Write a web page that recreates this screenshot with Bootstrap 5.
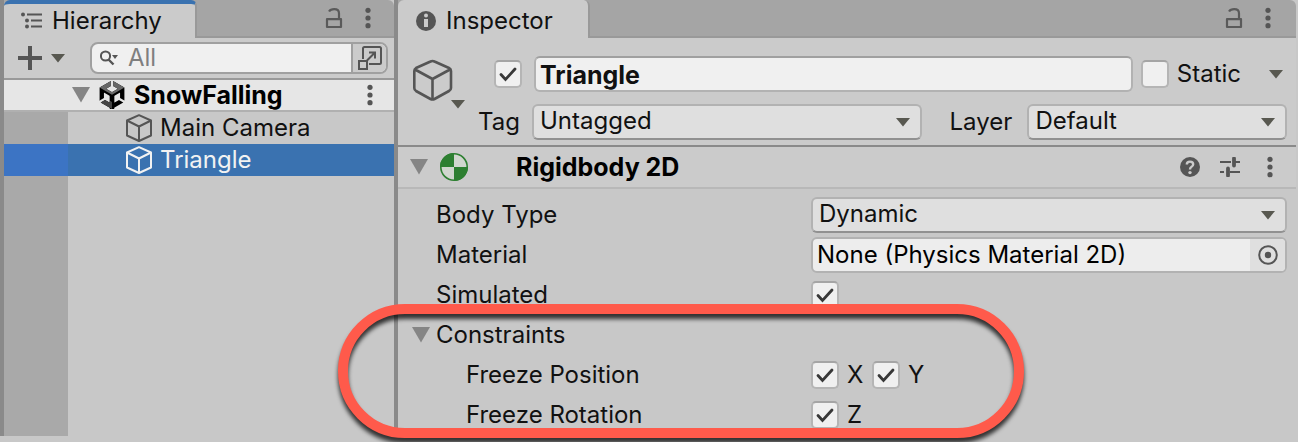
<!DOCTYPE html>
<html lang="en">
<head>
<meta charset="utf-8">
<meta name="viewport" content="width=device-width, initial-scale=1">
<title>Hierarchy and Inspector</title>
<link href="https://cdn.jsdelivr.net/npm/bootstrap@5.3.0/dist/css/bootstrap.min.css" rel="stylesheet">
<style>
  body { font: 400 24px/32px Inter, "Liberation Sans", sans-serif; color: #111; background: #c8c8c8; }
  .editor { min-height: 100vh; overflow: hidden; padding: 0 2px 6px 0; }
  .rail { width: 4px; background: #8a8a8a; }
  .pane { background: #c8c8c8; min-width: 0; }
  .pane-hierarchy { width: 390px; }
  svg { display: block; flex: none; }
  button, a { color: inherit; }
  .plain { border: 0; background: none; padding: 0; display: block; flex: none; }
  .strong { font-size: 25px; font-weight: 700; color: #000; }

  .tabstrip { height: 38px; background: #a5a5a5; border-top-right-radius: 6px; }
  .tab-rest { border-bottom: 2px solid #999; padding-right: 23px; gap: 22px; }
  .pane-inspector .tab-rest { padding-right: 25px; }
  .tab-on { background: #cbcbcb; border-right: 2px solid #999; border-radius: 6px 6px 0 0; padding-top: 3px; font-size: 24px; gap: 10px; }
  .tab-h { width: 193px; border-top: 4px solid #3a72b0; padding: 0 0 0 17px; gap: 9px; }
  .tab-i { width: 192px; padding-left: 18px; }

  .toolbar { height: 42px; background: #cbcbcb; border-bottom: 2px solid #999; padding: 0 6px 0 14px; }
  .create { gap: 9px; }
  .search { height: 32px; border: 2px solid #a0a0a0; border-radius: 8px; background: #f0f0f0; overflow: hidden; margin-left: 25px; }
  .search input { border: 0; background: none; outline: 0; padding: 0; min-width: 0; color: #111; }
  .search input::placeholder { color: #7f7f7f; opacity: 1; }
  .search .plain { background: #cbcbcb; border-left: 2px solid #a0a0a0; width: 35px; align-self: stretch; padding-left: 4px; }

  .scene { height: 32px; background: #e6e6e6; border-bottom: 2px solid #b0b0b0; padding: 0 21px 0 68px; }
  .tree { background: linear-gradient(to right, #a9a9a9 64px, #c8c8c8 64px); }
  .node { height: 32px; padding-left: 121px; gap: 7px; text-decoration: none; }
  .node.on { color: #f2f2f2; background: linear-gradient(to right, #3c74c4 64px, #3a72b0 64px); }

  .obj-head { background: #cbcbcb; border-bottom: 2px solid #8a8a8a; padding: 18px 9px 5px 15px; }
  .obj-icon { width: 61px; }
  .field { height: 36px; border: 2px solid #b2b2b2; border-radius: 6px; color: #111; font-size: 24px; line-height: 30px; }
  .field-text { background: #f0f0f0; border-top-color: #a0a0a0; padding: 2px 4px 0; min-width: 0; margin-left: 12px; }
  .field-text.strong { font-size: 25px; }
  .field-pick { appearance: none; border-bottom-color: #919191; padding: 0 40px 2px 6px; min-width: 0;
    background: #dfdfdf url("data:image/svg+xml,%3Csvg xmlns='http://www.w3.org/2000/svg' width='14' height='9'%3E%3Cpath d='M0 0H14L7 8.500z' fill='%23585850'/%3E%3C/svg%3E") no-repeat right 10px center; }
  .form-check-input.tick { width: 28px; height: 28px; margin: 0; flex: none; border: 2px solid #b5b5b5; border-top-color: #a5a5a5; border-radius: 5px; background-color: #f0f0f0; }
  .form-check-input.tick:checked { background: #f0f0f0 url("data:image/svg+xml,%3Csvg xmlns='http://www.w3.org/2000/svg' width='24' height='24' fill='none' stroke='%23383838' stroke-width='2.800'%3E%3Cpath d='M5 12.500l4.500 5L19 7' stroke-linecap='round'/%3E%3C/svg%3E") center/24px no-repeat; }
  .tag-label { width: 58px; padding-left: 4px; }
  .layer-label { width: 105px; padding-left: 27px; }
  .grow-tag { flex: 13 1 0; }
  .grow-layer { flex: 8 1 0; }

  .comp-head { height: 42px; background: #cbcbcb; border-bottom: 2px solid #b8b8b8; padding: 0 23px 0 12px; }
  .comp-icon { margin-left: 12px; }
  .comp-title { margin-left: 48px; }
  .comp-tools { gap: 20px; }
  .comp-tools .last { margin-left: 7px; }
  .props { padding: 6px 9px 1px 0; }
  .prop { height: 40px; }
  .prop-name { width: 413px; padding-left: 38px; flex: none; }
  .prop-sub { padding-left: 68px; }
  .fold { padding-left: 14px; gap: 6px; }
  .object-field { background: #ededed; overflow: hidden; }
  .object-field input { border: 0; background: none; padding: 0 4px; min-width: 0; outline: 0; }
  .object-field .plain { width: 35px; align-self: stretch; background: #dfdfdf; padding-left: 8px; }
  .axis { gap: 8px; }
  .axis-name { width: 25px; }

  .callout-ring { position: absolute; left: -60px; top: -11px; width: 686px; height: 134px; border: 10px solid #ff5a4b; border-radius: 67px; filter: drop-shadow(0 5px 2px rgba(0, 0, 0, .75)); pointer-events: none; }
</style>
</head>
<body>
<svg class="d-none">
  <symbol id="cube" viewBox="0 0 28 30"><path d="M14 2.200L26 7.500V22.500L14 28L2 22.500V7.500ZM2 7.500L14 13.500L26 7.500M14 13.500V28" fill="none" stroke="currentColor" stroke-width="2" stroke-linejoin="round"/></symbol>
  <symbol id="lock" viewBox="0 0 18 22"><path d="M2 12.200H16V20H2ZM14 12V6.500Q14 2.200 9.200 2.200Q5.500 2.200 4 4.500" fill="none" stroke="#5a5a5a" stroke-width="2.200" stroke-linejoin="round"/></symbol>
  <symbol id="dots" viewBox="0 0 6 22"><g fill="#555"><circle cx="3" cy="3.300" r="2.600"/><circle cx="3" cy="11" r="2.600"/><circle cx="3" cy="18.700" r="2.600"/></g></symbol>
  <symbol id="down" viewBox="0 0 14 9"><path d="M0 0H14L7 8.500Z" fill="#585850"/></symbol>
  <symbol id="fold" viewBox="0 0 18 16"><path d="M0 0H18L9 15.500Z" fill="#858585"/></symbol>
</svg>

<div class="editor d-flex">
  <div class="rail"></div>

  <section class="pane pane-hierarchy d-flex flex-column flex-shrink-0" aria-label="Hierarchy">
    <div class="tabstrip d-flex">
      <div class="tab-on tab-h d-flex align-items-center">
        <svg width="22" height="18" viewBox="0 0 22 18"><g fill="#555"><circle cx="2" cy="2.500" r="2"/><circle cx="6" cy="8.500" r="2"/><circle cx="6" cy="14.500" r="2"/></g><path d="M6 2.500H21M10 8.500H21M10 14.500H21" stroke="#555" stroke-width="2"/></svg>
        <span>Hierarchy</span>
      </div>
      <div class="tab-rest d-flex flex-grow-1 align-items-center justify-content-end">
        <button class="plain" aria-label="Lock"><svg width="18" height="22"><use href="#lock"/></svg></button>
        <button class="plain" aria-label="Menu"><svg width="6" height="22"><use href="#dots"/></svg></button>
      </div>
    </div>

    <div class="toolbar d-flex align-items-center">
      <button class="plain create d-flex align-items-center" aria-label="Create">
        <svg width="24" height="24"><path d="M12 0V24M0 12H24" stroke="#555" stroke-width="4"/></svg>
        <svg width="14" height="9"><use href="#down"/></svg>
      </button>
      <div class="search d-flex align-items-center flex-grow-1">
        <svg class="ms-2 me-2" width="20" height="18" viewBox="0 0 20 18"><circle cx="5.500" cy="7" r="4.600" fill="none" stroke="#555" stroke-width="2"/><path d="M8.500 10.500L13.500 15.500" stroke="#555" stroke-width="2.400"/><path d="M12 6H18L15 10Z" fill="#555"/></svg>
        <input class="flex-grow-1" type="text" placeholder="All" aria-label="Search">
        <button class="plain d-flex align-items-center" aria-label="Open search window"><svg width="26" height="26" viewBox="0 0 26 26" fill="none" stroke="#555" stroke-width="2"><path d="M6 14V3.500Q6 2 7.500 2H22.500Q24 2 24 3.500V17.500Q24 19 22.500 19H12M2 16H10V24H2ZM10 15.500L18 7.500M12 7.500H18V13.500"/></svg></button>
      </div>
    </div>

    <div class="scene d-flex align-items-center">
      <button class="plain" aria-label="Collapse scene"><svg width="18" height="16"><use href="#fold"/></svg></button>
      <svg class="ms-2 me-2" width="28" height="28" viewBox="0 0 24 24">
        <defs>
          <path id="scene-mark" d="m12.9288 4.2939 3.7997 2.1929c.1366.077.1415.2905 0 .3675l-4.515 2.6076a.4192.4192 0 0 1-.4246 0L7.274 6.8543c-.139-.0745-.1415-.293 0-.3675l3.7972-2.193V0L1.3758 5.5977V16.793l3.7177-2.1456v-4.3858c-.0025-.1565.1813-.2682.318-.1838l4.5148 2.6076a.4252.4252 0 0 1 .2136.3676v5.2127c.0025.1565-.1813.2682-.3179.1838l-3.7996-2.1929-3.7178 2.1457L12 24l9.6954-5.5977-3.7178-2.1457-3.7996 2.1929c-.1341.082-.3229-.0248-.3179-.1838V13.053c0-.1565.087-.2956.2136-.3676l4.5149-2.6076c.134-.082.3228.0224.3179.1838v4.3858l3.7177 2.1456V5.5977L12.9288 0Z"/>
          <clipPath id="face-top"><path d="M1.300 5.600L12 11.700L22.700 5.600L12 -1Z"/></clipPath>
          <clipPath id="face-foot"><path d="M0 16.100H9L12 18V24H0Z"/></clipPath>
        </defs>
        <path d="M12 11.700V24" stroke="#000" stroke-width="3.800"/>
        <use href="#scene-mark" fill="#000"/>
        <use href="#scene-mark" fill="#686868" clip-path="url(#face-top)"/>
        <use href="#scene-mark" fill="#444" clip-path="url(#face-foot)"/>
      </svg>
      <span class="flex-grow-1 strong">SnowFalling</span>
      <button class="plain" aria-label="Scene menu"><svg width="6" height="22"><use href="#dots"/></svg></button>
    </div>

    <nav class="tree flex-grow-1" aria-label="Scene objects">
      <a class="node d-flex align-items-center" href="#"><svg width="28" height="30" color="#555"><use href="#cube"/></svg>Main Camera</a>
      <a class="node on d-flex align-items-center" href="#" aria-current="true"><svg width="28" height="30"><use href="#cube"/></svg>Triangle</a>
    </nav>
  </section>

  <div class="rail"></div>

  <section class="pane pane-inspector flex-grow-1" aria-label="Inspector">
    <div class="tabstrip d-flex">
      <div class="tab-on tab-i d-flex align-items-center">
        <svg width="20" height="20" viewBox="0 0 20 20"><circle cx="10" cy="10" r="10" fill="#555"/><path d="M8 8H12V16H8Z" fill="#cbcbcb"/><circle cx="10" cy="4.600" r="2" fill="#cbcbcb"/></svg>
        <span>Inspector</span>
      </div>
      <div class="tab-rest d-flex flex-grow-1 align-items-center justify-content-end">
        <button class="plain" aria-label="Lock"><svg width="18" height="22"><use href="#lock"/></svg></button>
        <button class="plain" aria-label="Menu"><svg width="6" height="22"><use href="#dots"/></svg></button>
      </div>
    </div>

    <div class="obj-head d-flex">
      <button class="plain obj-icon align-self-start" aria-label="Object icon">
        <svg width="54" height="54" viewBox="0 0 54 54"><path d="M17.500 5.500Q19.500 4.500 21.500 5.500L36 12Q38 13 38 15V32Q38 34 36 35L21.500 43Q19.500 44 17.500 43L3 35Q1.300 34 1.300 32V15Q1.300 13 3 12ZM2 13.500L19.500 23L37 13.500M19.500 23V43" fill="none" stroke="#555" stroke-width="2.600" stroke-linejoin="round"/><path d="M38 44H52L45 52.500Z" fill="#585850"/></svg>
      </button>
      <div class="flex-grow-1 d-flex flex-column" style="gap:12px">
        <div class="d-flex align-items-center">
          <input class="form-check-input tick" type="checkbox" checked aria-label="Active" style="margin-left:20px">
          <input class="field field-text strong flex-grow-1" id="objname" type="text" value="Triangle" aria-label="Name">
          <input class="form-check-input tick ms-2 me-2" id="static" type="checkbox">
          <label for="static">Static</label>
          <button class="plain ms-4 me-1 ps-1" aria-label="Static options"><svg width="14" height="9"><use href="#down"/></svg></button>
        </div>
        <div class="d-flex align-items-center">
          <label class="tag-label" for="tag">Tag</label>
          <select class="field field-pick grow-tag" id="tag"><option>Untagged</option></select>
          <label class="layer-label" for="layer">Layer</label>
          <select class="field field-pick grow-layer" id="layer"><option>Default</option></select>
        </div>
      </div>
    </div>

    <div class="comp-head d-flex align-items-center">
      <button class="plain" aria-label="Collapse Rigidbody 2D"><svg width="18" height="16"><use href="#fold"/></svg></button>
      <svg class="comp-icon" width="28" height="28" viewBox="0 0 28 28"><circle cx="14" cy="14" r="13.200" fill="#d0d6ce" stroke="#2d7f31" stroke-width="1.600"/><path d="M14 14V0A14 14 0 0 0 0 14ZM14 14V28A14 14 0 0 0 28 14Z" fill="#2d7f31"/></svg>
      <span class="comp-title flex-grow-1 strong">Rigidbody 2D</span>
      <div class="comp-tools d-flex align-items-center">
        <button class="plain" aria-label="Help"><svg width="20" height="20" viewBox="0 0 20 20"><circle cx="10" cy="10" r="10" fill="#555"/><path d="M6.800 7.600Q6.800 4.600 10 4.600Q13.200 4.600 13.200 7.300Q13.200 9 11.300 10Q10 10.700 10 12.600" fill="none" stroke="#cbcbcb" stroke-width="2.400"/><circle cx="10" cy="15.600" r="1.700" fill="#cbcbcb"/></svg></button>
        <button class="plain" aria-label="Presets"><svg width="20" height="20" viewBox="0 0 20 20"><path d="M0 5H11M15 5H20M0 15H4M10 15H20" stroke="#555" stroke-width="2"/><path d="M14 1.500V8.500M8 11.500V18.500" stroke="#555" stroke-width="3.800" stroke-linecap="round"/></svg></button>
        <button class="plain last" aria-label="Component menu"><svg width="6" height="22"><use href="#dots"/></svg></button>
      </div>
    </div>

    <div class="props">
      <div class="prop d-flex align-items-center">
        <label class="prop-name" for="bodytype">Body Type</label>
        <select class="field field-pick flex-grow-1" id="bodytype"><option>Dynamic</option></select>
      </div>
      <div class="prop d-flex align-items-center">
        <label class="prop-name" for="material">Material</label>
        <div class="field object-field d-flex align-items-center flex-grow-1">
          <input class="flex-grow-1" id="material" type="text" value="None (Physics Material 2D)" readonly>
          <button class="plain d-flex align-items-center" aria-label="Pick material"><svg width="20" height="20" viewBox="0 0 20 20"><circle cx="10" cy="10" r="8.800" fill="none" stroke="#555" stroke-width="2"/><circle cx="10" cy="10" r="3.200" fill="#555"/></svg></button>
        </div>
      </div>
      <div class="prop d-flex align-items-center">
        <label class="prop-name" for="simulated">Simulated</label>
        <input class="form-check-input tick" id="simulated" type="checkbox" checked>
      </div>
      <div class="position-relative">
        <div class="prop fold d-flex align-items-center">
          <button class="plain" aria-label="Collapse Constraints"><svg width="18" height="16"><use href="#fold"/></svg></button>
          <span>Constraints</span>
        </div>
        <div class="prop d-flex align-items-center">
          <span class="prop-name prop-sub">Freeze Position</span>
          <div class="axis d-flex align-items-center">
            <input class="form-check-input tick" id="px" type="checkbox" checked><label class="axis-name" for="px">X</label>
          </div>
          <div class="axis d-flex align-items-center">
            <input class="form-check-input tick" id="py" type="checkbox" checked><label class="axis-name" for="py">Y</label>
          </div>
        </div>
        <div class="prop d-flex align-items-center">
          <span class="prop-name prop-sub">Freeze Rotation</span>
          <div class="axis d-flex align-items-center">
            <input class="form-check-input tick" id="rz" type="checkbox" checked><label class="axis-name" for="rz">Z</label>
          </div>
        </div>
        <div class="callout-ring"></div>
      </div>
    </div>
  </section>
</div>
<script src="https://cdn.jsdelivr.net/npm/bootstrap@5.3.0/dist/js/bootstrap.bundle.min.js"></script>
</body>
</html>
